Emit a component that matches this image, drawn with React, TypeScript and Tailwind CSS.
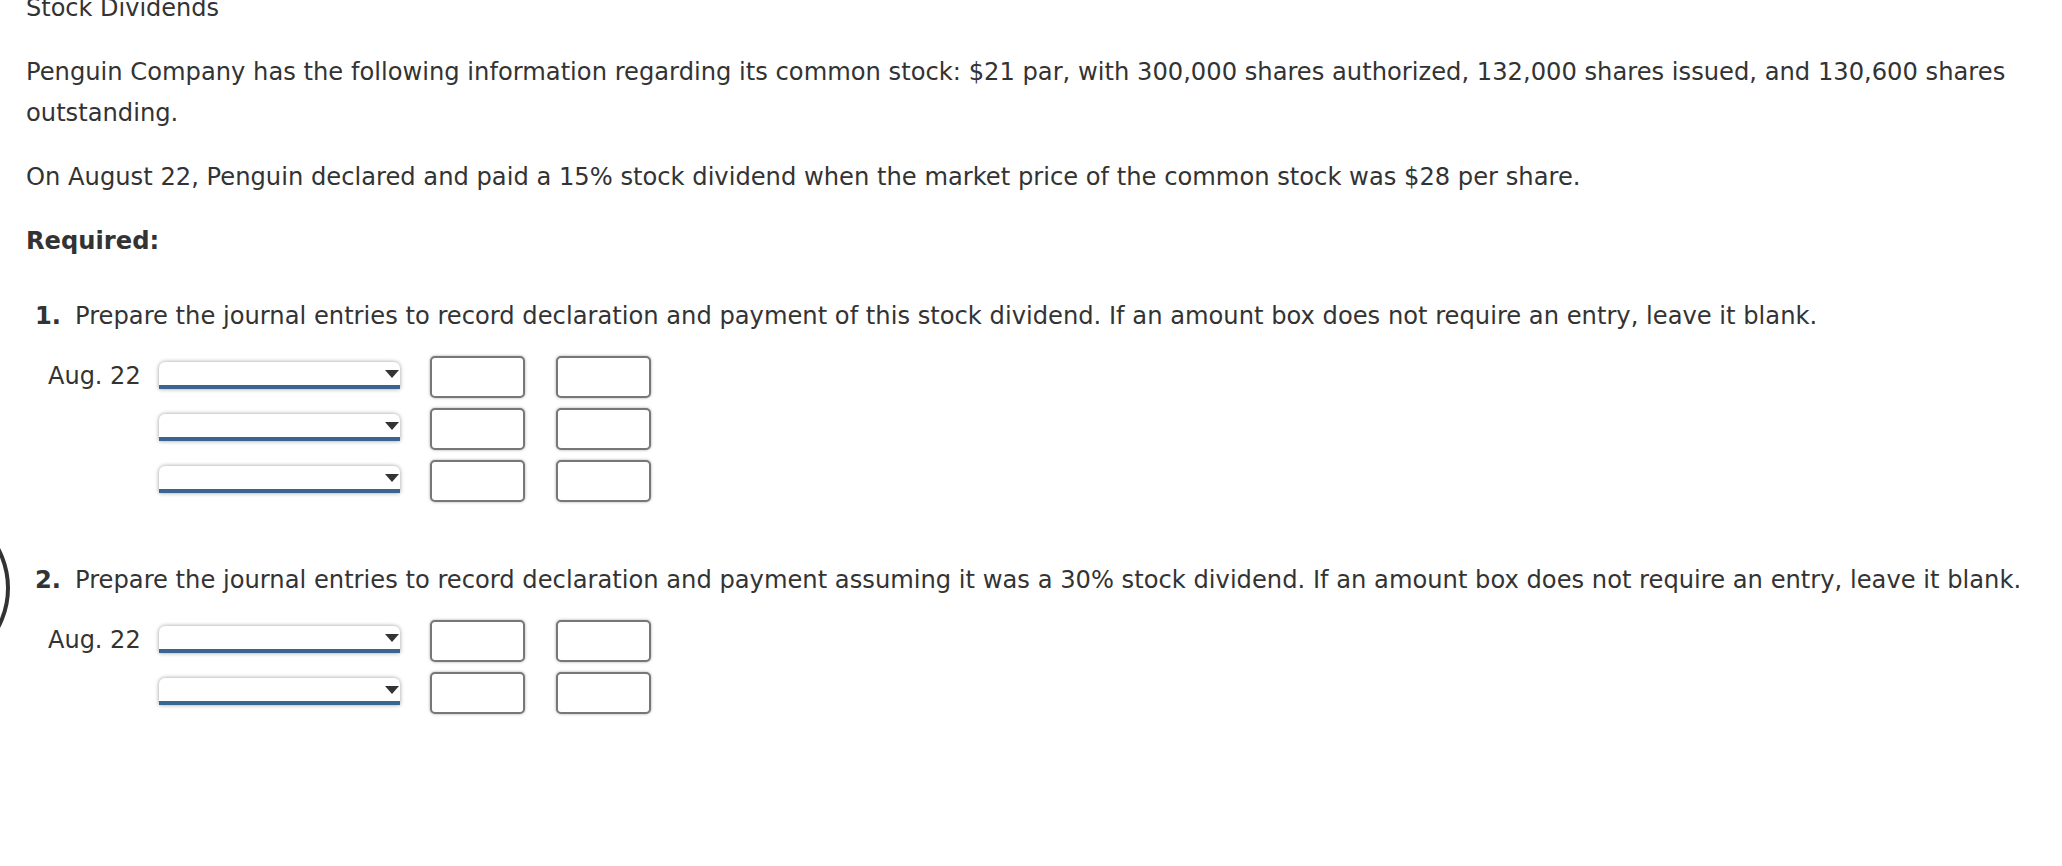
import React from "react";

const font = { fontFamily: '"DejaVu Sans", Verdana, sans-serif' };

function Select() {
  return (
    <div className="relative w-[241px] h-[23px] bg-white rounded-t-[6px] shadow-[0_0_4px_rgba(0,0,0,0.4)] border-b-[4px] border-[#3b6591] box-content">
      <svg className="absolute right-[1px] top-[8px]" width="14" height="9" viewBox="0 0 14 9">
        <polygon points="0,0 14,0 7,8" fill="#333" />
      </svg>
    </div>
  );
}

function Amount() {
  return (
    <div className="w-[95px] h-[42px] bg-white rounded-[5px] border-2 border-[#777] shadow-[0_0_3px_rgba(0,0,0,0.35)] box-border" />
  );
}

function Row({ label }: { label?: string }) {
  return (
    <div className="flex items-start h-[42px]">
      <div className="w-[159px] shrink-0 pl-[48px] pt-[6px] text-[24px] leading-[28px] text-[#333] whitespace-nowrap">{label ?? ""}</div>
      <div className="pt-[6px] shrink-0">
        <Select />
      </div>
      <div className="ml-[30px] shrink-0">
        <Amount />
      </div>
      <div className="ml-[31px] shrink-0">
        <Amount />
      </div>
    </div>
  );
}

function Question({ num, text, rows }: { num: string; text: string; rows: number }) {
  return (
    <div>
      <div className="flex pl-[35px] text-[24.2px] leading-[40px] text-[#333] whitespace-nowrap">
        <span className="font-bold w-[40px]">{num}</span>
        <span>{text}</span>
      </div>
      <div className="mt-[20px] flex flex-col gap-[10px]">
        {Array.from({ length: rows }).map((_, i) => (
          <Row key={i} label={i === 0 ? "Aug. 22" : undefined} />
        ))}
      </div>
    </div>
  );
}

export default function App() {
  return (
    <div className="relative w-[2062px] h-[866px] bg-white overflow-hidden text-[#333]" style={font}>
      <div className="pl-[26px] pr-[30px]">
        <div className="-mt-[13px] text-[24px] leading-[42px]">Stock Dividends</div>
        <p className="mt-[23px] text-[24.2px] leading-[41px]">
          Penguin Company has the following information regarding its common stock: $21 par, with 300,000 shares authorized, 132,000 shares issued, and 130,600 shares outstanding.
        </p>
        <p className="mt-[23px] text-[24.2px] leading-[40px]">
          On August 22, Penguin declared and paid a 15% stock dividend when the market price of the common stock was $28 per share.
        </p>
        <p className="mt-[24px] text-[24.2px] leading-[40px] font-bold">Required:</p>
      </div>
      <div className="mt-[35px]">
        <Question
          num="1."
          text="Prepare the journal entries to record declaration and payment of this stock dividend. If an amount box does not require an entry, leave it blank."
          rows={3}
        />
      </div>
      <div className="mt-[58px]">
        <Question
          num="2."
          text="Prepare the journal entries to record declaration and payment assuming it was a 30% stock dividend. If an amount box does not require an entry, leave it blank."
          rows={2}
        />
      </div>
      <div className="absolute left-[-160px] top-[503px] w-[170px] h-[170px] rounded-full border-[4px] border-[#333]" />
    </div>
  );
}
